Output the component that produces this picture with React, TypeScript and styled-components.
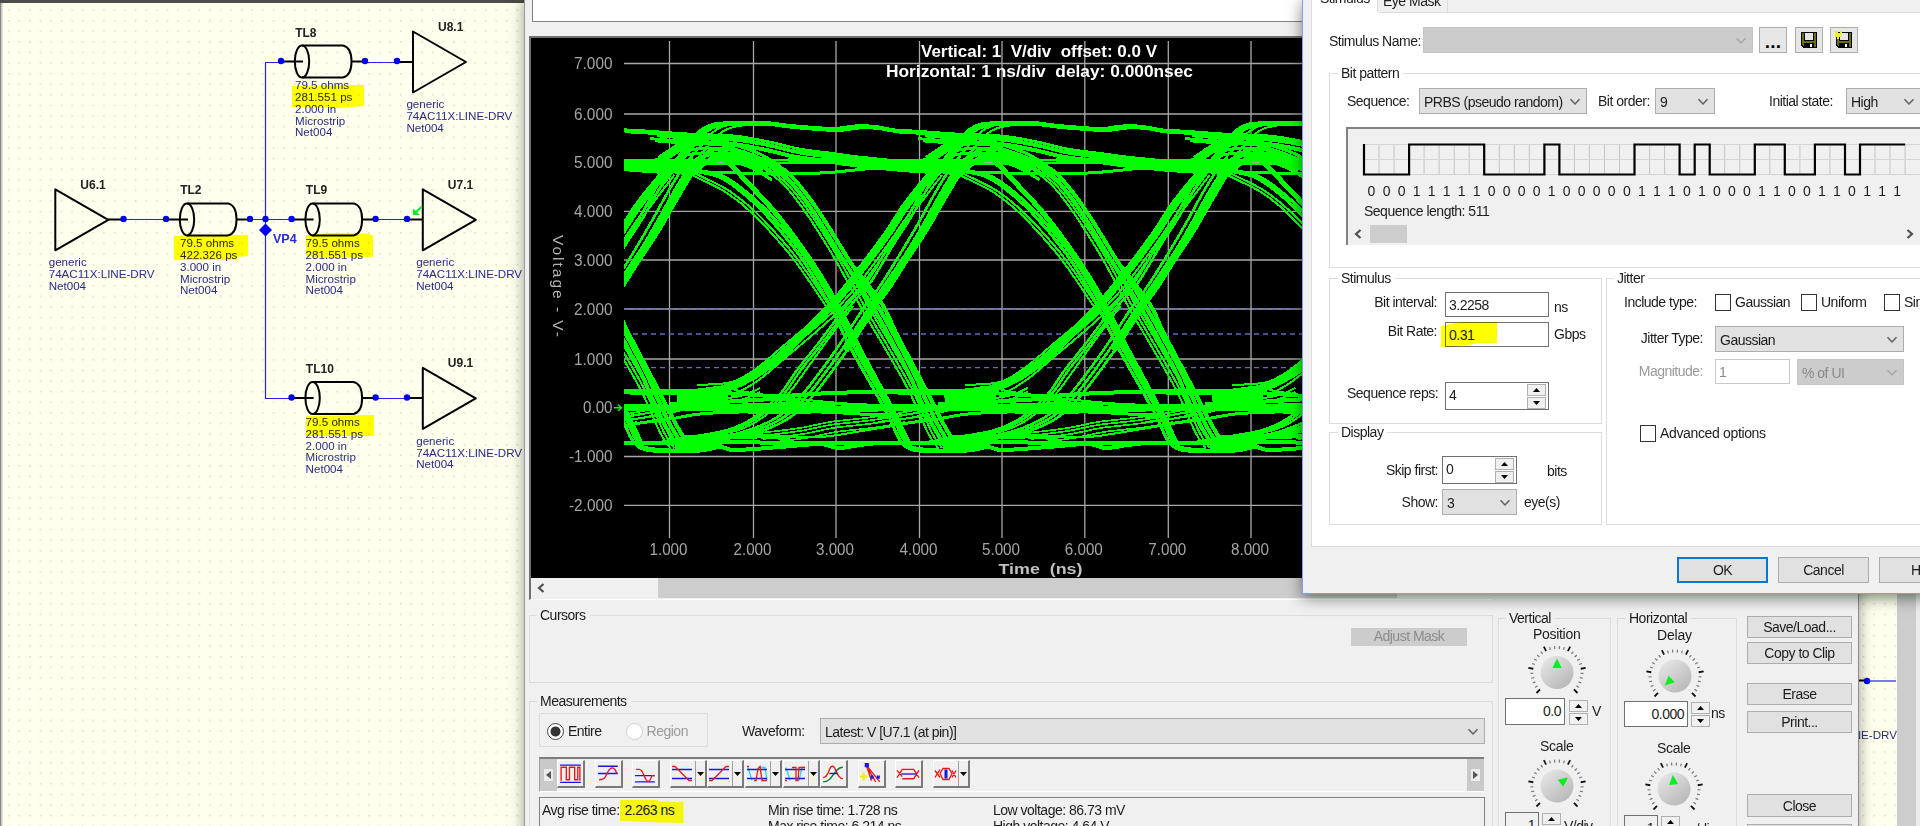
import React from "react";
import styled, { createGlobalStyle, css } from "styled-components";

const Global = createGlobalStyle`
  body { margin: 0; background: #ffffee; overflow: hidden; }
  * { box-sizing: border-box; }
`;

const UI_FONT = `"Liberation Sans", Arial, sans-serif`;

const Desktop = styled.div`
  position: relative;
  width: 1920px;
  height: 826px;
  overflow: hidden;
  background: #ffffee;
  font: 14px/16px ${UI_FONT};
  letter-spacing: -0.5px;
  color: #1c1c1c;
  white-space: pre;
`;

/* ---------- schematic editor ---------- */

const SchematicCanvas = styled.svg`
  display: block;
  width: 1920px;
  height: 826px;
  letter-spacing: 0;
`;

const Ref = styled.text`
  font: bold 12px ${UI_FONT};
  fill: #222;
`;

const Note = styled.text`
  font: 11.6px ${UI_FONT};
  fill: #2a2a86;
`;

const Marker = styled.polygon`
  fill: #ffff00;
  mix-blend-mode: multiply;
`;

const Notes = ({ x, ys, lines }: { x: number; ys: number[]; lines: string[] }) => (
  <>
    {lines.map((l, i) => (
      <Note key={i} x={x} y={ys[i] + 0.6}>{l}</Note>
    ))}
  </>
);

const Pin = ({ x, y }: { x: number; y: number }) => <circle cx={x} cy={y} r={3.2} fill="#0000f0" />;

const Wire = ({ d }: { d: string }) => <path d={d} fill="none" stroke="#2222e8" strokeWidth={1.2} />;

const Buffer = ({ x, y, name }: { x: number; y: number; name: string }) => (
  <g>
    <path d={`M${x} ${y - 30.5}V${y + 30.5}L${x + 53} ${y}Z`} fill="none" stroke="#000" strokeWidth={2} strokeLinejoin="round" />
    <Ref x={x + 25} y={y - 31.3}>{name}</Ref>
    <Notes x={x - 6.6} ys={[y + 45.5, y + 57.7, y + 69.2]} lines={["generic", "74AC11X:LINE-DRV", "Net004"]} />
  </g>
);

type LineProps = { x: number; y: number; name: string; delay: string; length: string };
const TransmissionLine = ({ x, y, name, delay, length }: LineProps) => (
  <g>
    <g fill="none" stroke="#000" strokeWidth={2}>
      <ellipse cx={x} cy={y} rx={7.2} ry={16} />
      <path d={`M${x} ${y - 16}H${x + 41}Q${x + 49.5} ${y - 14} ${x + 49.5} ${y}Q${x + 49.5} ${y + 14} ${x + 41} ${y + 16}H${x}`} />
      <path d={`M${x - 19} ${y}H${x + 1}M${x + 50} ${y}H${x + 62}`} />
    </g>
    <Pin x={x - 21} y={y - 0.5} />
    <Pin x={x + 63} y={y - 0.5} />
    <Ref x={x - 6.8} y={y - 25}>{name}</Ref>
    <Notes
      x={x - 7}
      ys={[y + 27.2, y + 39, y + 51, y + 62.6, y + 74]}
      lines={["79.5 ohms", delay, length, "Microstrip", "Net004"]}
    />
  </g>
);

const Schematic = () => (
  <SchematicCanvas viewBox="0 0 1920 826">
    <defs>
      <pattern id="dots" x="3" y="4.5" width="10.6" height="10.6" patternUnits="userSpaceOnUse">
        <rect x="5" y="5" width="1.2" height="1.2" fill="#c6c6b4" />
      </pattern>
    </defs>
    <rect width="1920" height="826" fill="#ffffee" />
    <rect width="1920" height="826" fill="url(#dots)" />
    <rect width="1.5" height="826" fill="#8a8a8a" />
    <rect x="1.5" width="1" height="826" fill="#c8c8c0" />
    <rect width="525" height="3" fill="#4c4c48" />
    <Wire d="M280 62.5H265.5V398.5H291" />
    <Wire d="M123 219.5H165M249 219.5H292M375 219.5H407M366 62.5H397M375 398.5H407" />
    <path d="M108 219.400H123M397 62H413M407 219.400H423M407 398H423" stroke="#000" strokeWidth={2} />
    <TransmissionLine x={302} y={61.5} name="TL8" delay="281.551 ps" length="2.000 in" />
    <TransmissionLine x={187} y={219.4} name="TL2" delay="422.326 ps" length="3.000 in" />
    <TransmissionLine x={312.6} y={219.4} name="TL9" delay="281.551 ps" length="2.000 in" />
    <TransmissionLine x={312.6} y={398} name="TL10" delay="281.551 ps" length="2.000 in" />
    <Buffer x={413} y={62} name="U8.1" />
    <Buffer x={55.3} y={219.8} name="U6.1" />
    <Buffer x={422.8} y={219.8} name="U7.1" />
    <Buffer x={422.8} y={398.4} name="U9.1" />
    <Pin x={123.5} y={218.9} />
    <Pin x={265.5} y={218.9} />
    <Pin x={397} y={61} />
    <Pin x={407} y={218.9} />
    <Pin x={407} y={397.5} />
    <path d="M265.5 223.5L272 230L265.5 236.5L259 230Z" fill="#0000f0" />
    <text x="273" y="243" fontFamily="Liberation Sans" fontWeight="bold" fontSize="12.5" fill="#2828e8">VP4</text>
    <path d="M422 206.5L415 213" stroke="#00f020" strokeWidth={2} />
    <path d="M413 208.5V215H420Z" fill="#00f020" />
    <Marker points="292,86 364,85 364,106 340,108 292,107" />
    <Marker points="174,236 248,235 248,256 238,257 236,260 174,260" />
    <Marker points="306,235 330,233 369,233.5 373,236 373,257 330,258 306,256" />
    <Marker points="306,416 374,415 374,436 306,436" />
    {/* fragment of the sheet to the right of the oscilloscope */}
    <path d="M1856 680.5H1866" stroke="#000" strokeWidth={2} />
    <Pin x={1867} y={681} />
    <Wire d="M1867 681H1896" />
    <Note x={1791} y={739}>74AC11X:LINE-DRV</Note>
    <rect x="1897" width="19" height="826" fill="#cdcdcd" />
    <rect x="1916" width="4" height="826" fill="#ececec" />
  </SchematicCanvas>
);

/* ---------- shared controls ---------- */

const Row = styled.div<{ $mt?: number; $ml?: number; $h?: number }>`
  display: flex;
  align-items: flex-start;
  margin-top: ${(p) => p.$mt ?? 0}px;
  margin-left: ${(p) => p.$ml ?? 0}px;
  height: ${(p) => (p.$h ? `${p.$h}px` : "auto")};
`;

const Label = styled.span<{ $w?: number; $ml?: number; $pt?: number; $right?: boolean; $off?: boolean; $ls?: number }>`
  flex: none;
  width: ${(p) => (p.$w ? `${p.$w}px` : "auto")};
  margin-left: ${(p) => p.$ml ?? 0}px;
  padding-top: ${(p) => p.$pt ?? 0}px;
  text-align: ${(p) => (p.$right ? "right" : "left")};
  color: ${(p) => (p.$off ? "#9a9a9a" : "inherit")};
  ${(p) => p.$ls !== undefined && css`letter-spacing: ${p.$ls}px;`}
`;

const Group = styled.fieldset<{ $w: number; $h: number; $pl: number; $mt?: number; $line?: string }>`
  flex: none;
  min-width: 0;
  width: ${(p) => p.$w}px;
  height: ${(p) => p.$h}px;
  margin: ${(p) => p.$mt ?? 0}px 0 0;
  padding: 0 0 0 ${(p) => p.$pl}px;
  border: 1px solid ${(p) => p.$line ?? "#dcdcdc"};
`;

const Legend = styled.legend<{ $ml: number }>`
  margin-left: ${(p) => p.$ml}px;
  padding: 0 4px 0 3px;
`;

const ComboBox = styled.div<{ $w: number; $ml?: number; $mt?: number; $off?: boolean }>`
  flex: none;
  display: flex;
  align-items: center;
  justify-content: space-between;
  width: ${(p) => p.$w}px;
  height: 26px;
  margin-left: ${(p) => p.$ml ?? 0}px;
  margin-top: ${(p) => p.$mt ?? 0}px;
  padding: 1px 5px 0 4px;
  border: 1px solid ${(p) => (p.$off ? "#c4c4c4" : "#adadad")};
  background: ${(p) => (p.$off ? "#cccccc" : "#e1e1e1")};
  color: ${(p) => (p.$off ? "#8a8a8a" : "#1c1c1c")};
`;

const Chevron = ({ off }: { off?: boolean }) => (
  <svg width="12" height="8" viewBox="0 0 12 8">
    <path d="M1.5 1.2L6 6L10.5 1.2" fill="none" stroke={off ? "#a8a8a8" : "#606060"} strokeWidth="1.5" />
  </svg>
);

type ComboProps = { w: number; ml?: number; mt?: number; off?: boolean; value?: string };
const Combo = ({ w, ml, mt, off, value }: ComboProps) => (
  <ComboBox $w={w} $ml={ml} $mt={mt} $off={off}>
    <span>{value}</span>
    <Chevron off={off} />
  </ComboBox>
);

const Field = styled.div<{ $w: number; $h?: number; $ml?: number; $off?: boolean; $right?: boolean; $bg?: string }>`
  flex: none;
  display: flex;
  justify-content: ${(p) => (p.$right ? "flex-end" : "space-between")};
  width: ${(p) => p.$w}px;
  height: ${(p) => p.$h ?? 25}px;
  margin-left: ${(p) => p.$ml ?? 0}px;
  padding: 4px ${(p) => (p.$right ? 3 : 2)}px 0 3px;
  border: 1px solid ${(p) => (p.$off ? "#c8c8c8" : "#707070")};
  background: ${(p) => p.$bg ?? "#fff"};
  color: ${(p) => (p.$off ? "#8a8a8a" : "#1c1c1c")};
`;

const Highlight = styled.span`
  margin: -5px 0 0 -8px;
  padding: 5px 0 0 8px;
  width: 56px;
  height: 25px;
  background: #ffff00;
  mix-blend-mode: multiply;
  clip-path: polygon(0 16%, 35% 0, 100% 0, 100% 84%, 65% 84%, 50% 92%, 12% 100%, 0 100%);
`;

const SpinColumn = styled.div<{ $ml?: number; $mt?: number }>`
  display: flex;
  flex: none;
  flex-direction: column;
  gap: 1px;
  width: 19px;
  margin: ${(p) => p.$mt ?? 0}px 0 0 ${(p) => p.$ml ?? 0}px;
`;

const SpinButton = styled.div`
  display: flex;
  align-items: center;
  justify-content: center;
  height: 12px;
  border: 1px solid #b0b0b0;
  background: #f0f0f0;
`;

const Spin = ({ ml, mt }: { ml?: number; mt?: number }) => (
  <SpinColumn $ml={ml} $mt={mt}>
    <SpinButton><svg width="7" height="4"><path d="M3.5 0L7 4H0Z" /></svg></SpinButton>
    <SpinButton><svg width="7" height="4"><path d="M0 0H7L3.5 4Z" /></svg></SpinButton>
  </SpinColumn>
);

const Button = styled.div<{ $w: number; $h?: number; $ml?: number; $mt?: number; $primary?: boolean; $off?: boolean }>`
  flex: none;
  width: ${(p) => p.$w}px;
  height: ${(p) => p.$h ?? 26}px;
  line-height: ${(p) => (p.$h ?? 26) - (p.$primary ? 3 : 1)}px;
  margin: ${(p) => p.$mt ?? 0}px 0 0 ${(p) => p.$ml ?? 0}px;
  overflow: hidden;
  text-align: center;
  border: ${(p) => (p.$primary ? "2px solid #0078d7" : p.$off ? "0" : "1px solid #adadad")};
  background: ${(p) => (p.$off ? "#cccccc" : "#e1e1e1")};
  color: ${(p) => (p.$off ? "#8c8c8c" : "#1c1c1c")};
`;

const CheckBox = styled.span<{ $ml?: number }>`
  flex: none;
  width: 16px;
  height: 17px;
  margin-left: ${(p) => p.$ml ?? 0}px;
  border: 1px solid #333;
  background: #fff;
`;

/* ---------- oscilloscope: eye diagram ---------- */

type Pt = [number, number];

const smooth = (pts: Pt[]) => {
  let d = `M${pts[0][0].toFixed(1)} ${pts[0][1].toFixed(1)}`;
  for (let i = 0; i < pts.length - 1; i++) {
    const p0 = pts[Math.max(0, i - 1)];
    const p1 = pts[i];
    const p2 = pts[i + 1];
    const p3 = pts[Math.min(pts.length - 1, i + 2)];
    const c = [
      p1[0] + (p2[0] - p0[0]) / 6, p1[1] + (p2[1] - p0[1]) / 6,
      p2[0] - (p3[0] - p1[0]) / 6, p2[1] - (p3[1] - p1[1]) / 6,
      p2[0], p2[1],
    ];
    d += `C${c.map((v) => v.toFixed(1)).join(" ")}`;
  }
  return d;
};

type Trace = { pts: Pt[]; w?: number; off?: Pt[] };

const traces: Trace[] = [
  /* overshoot plateau, decaying back to the 5 V rail */
  { w: 4, pts: [[672, 166], [690, 143], [702, 130], [714, 124.5], [735, 123], [765, 123], [790, 126], [815, 128], [835, 129], [855, 126.5], [875, 127], [895, 130.5], [920, 132], [945, 135], [965, 138]], off: [[0, 0], [4, 1]] },
  { w: 2, pts: [[683, 166], [700, 147], [712, 133], [724, 126], [745, 122]], off: [[0, 0], [6, 2]] },
  { w: 2.6, pts: [[655, 131.5], [690, 134], [735, 136], [770, 142], [800, 149], [830, 153], [860, 157], [900, 161], [930, 163]], off: [[0, 0], [-4, 2], [2, 4.5], [-5, 7], [0, 9.5]] },
  { w: 3, pts: [[690, 142], [712, 139], [735, 145], [760, 154], [780, 166]], off: [[0, 0], [0, 4], [-4, 9], [-8, 14]] },
  { w: 4, pts: [[700, 160], [712, 150], [728, 149], [745, 154], [765, 160]], off: [[0, 0], [-5, 5], [4, 5], [-2, 10]] },
  { w: 9, pts: [[660, 160], [678, 148], [692, 139], [702, 140]] },
  { w: 8, pts: [[722, 155], [740, 157], [766, 163]] },
  { w: 14, pts: [[655, 165], [672, 166], [696, 170]] },
  /* 5 V rail */
  { w: 2.5, pts: [[610, 160], [680, 160], [740, 161], [800, 159.5], [860, 159.5], [900, 160]], off: [[0, 0], [0, 3]] },
  { w: 11, pts: [[868, 164.5], [900, 165], [950, 165]] },
  { w: 9, pts: [[935, 165], [964, 166]] },
  { w: 3, pts: [[640, 169], [680, 171], [720, 172.5], [765, 173.5], [820, 173], [860, 169.5], [890, 166]] },
  /* falling edges */
  { w: 2, pts: [[665, 168], [682, 171], [700, 179], [727, 193], [753, 214], [787, 251], [807, 278], [829, 311]], off: [[0, 0], [2.5, -2]] },
  { w: 3, pts: [[690, 169], [720, 175], [740, 187], [767, 211], [800, 250], [820, 281], [837, 312], [853, 345], [877, 388], [893, 417], [904, 440], [917, 449], [945, 451]], off: [[0, 0], [-3.5, 1]] },
  { w: 5, pts: [[722, 158], [732, 166], [747, 182], [773, 210], [797, 241], [820, 275], [838, 306], [856, 342], [879, 385], [896, 417], [908, 442]] },
  { w: 2, pts: [[755, 160], [770, 170], [790, 187], [810, 213], [833, 249], [850, 279], [867, 311], [887, 345], [913, 391], [932, 433], [942, 448]], off: [[0, 0], [4, 0], [-4, 0]] },
  { w: 4, pts: [[765, 160], [787, 172], [807, 195], [823, 218], [847, 257], [880, 310], [913, 371], [924, 396], [938, 425], [952, 448]], off: [[0, 0], [-5, 1]] },
  { w: 4, pts: [[850, 262], [882, 304], [896, 333], [925, 388], [944, 425], [956, 445]] },
  /* rising edges */
  { w: 8, pts: [[690, 393], [720, 390], [753, 376], [780, 356], [807, 330], [833, 304], [856, 276], [886, 236], [905, 207], [923, 184], [937, 168]] },
  { w: 2, pts: [[700, 391], [735, 388], [760, 374], [785, 353], [810, 332], [837, 308], [861, 281], [891, 240], [911, 211], [929, 187], [942, 170]], off: [[0, 0], [0, 5], [-3, -6]] },
  { w: 2.4, pts: [[660, 442], [690, 437], [727, 430], [753, 418], [780, 394], [797, 370], [820, 341], [847, 305], [867, 282], [890, 244], [908, 216], [926, 184], [940, 164]], off: [[0, 0], [3.5, 0.5]] },
  { w: 2, pts: [[690, 438], [735, 431], [762, 418], [788, 394], [806, 370], [829, 338], [853, 306]] },
  { w: 2.6, pts: [[700, 440], [740, 435], [767, 426], [787, 415], [807, 396], [833, 362], [853, 333], [870, 307], [887, 284], [920, 230], [940, 194], [955, 170], [965, 158]], off: [[0, 0], [-5, -1], [5, 1]] },
  { w: 8, pts: [[845, 350], [873, 307], [890, 282], [923, 232], [941, 201], [957, 174], [965, 163]] },
  /* 0 V rails */
  { w: 4, pts: [[610, 392], [660, 393], [700, 392], [740, 394], [780, 396], [830, 393], [878, 392]] },
  { w: 2, pts: [[610, 390], [690, 390], [720, 387], [745, 392], [790, 398], [840, 403], [878, 405]] },
  { w: 3, pts: [[610, 405.5], [700, 406], [780, 404], [840, 404], [878, 405.5]] },
  { w: 6, pts: [[610, 408.5], [700, 408], [790, 408], [835, 408.5], [878, 408.5]] },
  { w: 3, pts: [[700, 409], [760, 412.5], [820, 412], [860, 414], [890, 415]] },
  { w: 11, pts: [[677, 400], [700, 398], [728, 397]] },
  { w: 4, pts: [[670, 404], [700, 403], [740, 401], [780, 399], [800, 402]] },
  { w: 2, pts: [[610, 418], [635, 415], [665, 410], [700, 402], [740, 396], [760, 388]], off: [[0, 0], [0, 4]] },
  { w: 3, pts: [[610, 428], [640, 423], [670, 419], [700, 414], [740, 412], [780, 412]] },
  /* undershoot rails */
  { w: 4, pts: [[610, 443], [680, 443], [720, 442], [800, 443], [878, 443]] },
  { w: 4, pts: [[640, 447], [660, 450], [700, 450.5], [720, 447], [735, 450], [780, 447], [820, 444], [838, 448], [860, 445], [878, 443]] },
  { w: 11, pts: [[675, 444], [700, 444], [722, 443]] },
  { w: 5, pts: [[682, 438], [720, 437], [760, 436], [790, 438]] },
  { w: 2, pts: [[740, 438], [780, 437], [820, 437], [850, 433], [885, 427], [905, 422]] },
  { w: 1.7, pts: [[760, 436], [800, 431], [830, 425], [865, 421], [900, 416], [925, 411]], off: [[0, 0], [3, 3], [0, -3], [6, 7]] },
];

const PERIOD = 267.7;
const gridX = [669.5, 753.5, 836, 919.5, 1002, 1084.8, 1168.3, 1251, 1334, 1417];
const gridY: [string, number][] = [
  ["7.000", 63.5], ["6.000", 114], ["5.000", 162.5], ["4.000", 211.3], ["3.000", 260],
  ["2.000", 309], ["1.000", 359], ["0.00", 407.5], ["-1.000", 456.5], ["-2.000", 505.3],
];

const ScopePlot = styled.svg`
  display: block;
  background: #000;
  letter-spacing: 0;
`;

const AxisText = styled.text`
  font: 16px ${UI_FONT};
  fill: #a6a6a6;
`;

const ScopeTitle = styled.text`
  font: bold 16px ${UI_FONT};
  fill: #fff;
  white-space: pre;
`;

const EyeDiagram = () => (
  <ScopePlot width="961" height="540" viewBox="531 38 961 540">
    <defs>
      <clipPath id="plot"><rect x="624" y="38" width="900" height="500" /></clipPath>
      <g id="eye" fill="none" stroke="#00ff00" shapeRendering="crispEdges">
        {traces.map((t, i) =>
          (t.off ?? ([[0, 0]] as Pt[])).map((o, j) => (
            <path key={`${i}-${j}`} d={smooth(t.pts)} strokeWidth={t.w ?? 2} transform={`translate(${o[0]} ${o[1]})`} />
          ))
        )}
      </g>
    </defs>
    <g stroke="#a8a8a8" strokeWidth="1.3">
      {gridX.map((x) => <path key={x} d={`M${x} 41V538`} />)}
      {gridY.filter(([l]) => l !== "0.00").map(([l, y]) => <path key={l} d={`M624 ${y}H1500`} />)}
    </g>
    <g stroke="#6a6ab8" strokeWidth="1.4" strokeDasharray="5 4">
      <path d="M624 309H1500M624 334H1500M624 367.6H1500" />
    </g>
    <g clipPath="url(#plot)">
      {[-1, 0, 1, 2].map((k) => <use key={k} href="#eye" x={k * PERIOD} />)}
    </g>
    {gridY.map(([l, y]) => (
      <AxisText key={l} x={612.5} y={y + 5.8} textAnchor="end" textLength={l === "0.00" ? 29.5 : l[0] === "-" ? 43.5 : 38.5} lengthAdjust="spacingAndGlyphs">{l}</AxisText>
    ))}
    {gridX.map((x, i) => (
      <AxisText key={x} x={x - 1} y={555} textAnchor="middle" textLength={38} lengthAdjust="spacingAndGlyphs">{`${i + 1}.000`}</AxisText>
    ))}
    <path d="M614 407.7H621M618 404.5L621.5 407.7L618 411" stroke="#00ff00" strokeWidth="1.4" fill="none" />
    <text transform="translate(553 235) rotate(90)" fontFamily="Liberation Sans" fontSize="15.5" fill="#b4b4b4" textLength="102">Voltage - V-</text>
    <text x="998.5" y="574" fontFamily="Liberation Sans" fontWeight="bold" fontSize="15.5" fill="#c0c0c0" textLength="84" lengthAdjust="spacingAndGlyphs" xmlSpace="preserve">{"Time  (ns)"}</text>
    <ScopeTitle x="921" y="57" textLength="236" lengthAdjust="spacingAndGlyphs" xmlSpace="preserve">{"Vertical: 1  V/div  offset: 0.0 V"}</ScopeTitle>
    <ScopeTitle x="886" y="77" textLength="307" lengthAdjust="spacingAndGlyphs" xmlSpace="preserve">{"Horizontal: 1 ns/div  delay: 0.000nsec"}</ScopeTitle>
  </ScopePlot>
);

/* ---------- oscilloscope window ---------- */

const ScopeWindow = styled.div`
  position: absolute;
  left: 524px;
  top: 0;
  width: 1335px;
  height: 840px;
  border-left: 1px solid #9a9a9a;
  border-right: 1px solid #8c8c8c;
  background: #f0f0f0;
  box-shadow: 0 0 14px rgba(0, 0, 0, 0.4);
`;

const ListPane = styled.div`
  width: 960px;
  height: 22px;
  margin-left: 7px;
  border: 1px solid #828282;
  border-width: 0 0 1px 1px;
  background: #fff;
`;

const PlotFrame = styled.div`
  width: 963px;
  height: 564px;
  margin: 14px 0 0 4px;
  border: solid #707070;
  border-width: 2px 0 0 2px;
  border-bottom: 1px solid #fff;
`;

const ScrollTrack = styled.div<{ $h: number }>`
  display: flex;
  align-items: center;
  height: ${(p) => p.$h}px;
  background: #f0f0f0;
`;

const ScrollThumb = styled.div<{ $w: number; $ml: number }>`
  width: ${(p) => p.$w}px;
  height: 100%;
  margin-left: ${(p) => p.$ml}px;
  background: #cdcdcd;
`;

const ScrollArrow = ({ right, ml }: { right?: boolean; ml: number }) => (
  <svg width={8 + ml} height="12" viewBox={`${-ml} 0 ${8 + ml} 12`}>
    <path d={right ? "M1.5 2L6 6L1.5 10" : "M6.5 2L2 6L6.5 10"} fill="none" stroke="#505050" strokeWidth="2.2" />
  </svg>
);

const Lower = styled.div`
  display: flex;
  margin: 7px 0 0 4px;
`;

const Column = styled.div<{ $w: number; $ml?: number; $mt?: number }>`
  flex: none;
  display: flex;
  flex-direction: column;
  width: ${(p) => p.$w}px;
  margin: ${(p) => p.$mt ?? 0}px 0 0 ${(p) => p.$ml ?? 0}px;
`;

const RadioPanel = styled.div`
  display: flex;
  align-items: center;
  flex: none;
  width: 169px;
  height: 34px;
  padding: 2px 0 0 7px;
  border: 1px solid #dcdcdc;
`;

const Radio = styled.span<{ $on?: boolean; $ml?: number }>`
  width: 17px;
  height: 17px;
  margin: 0 4px 0 ${(p) => p.$ml ?? 0}px;
  border: 1.5px solid ${(p) => (p.$on ? "#444" : "#cfcfcf")};
  border-radius: 50%;
  background: ${(p) => (p.$on ? "radial-gradient(circle, #333 0 4.6px, #fff 5.4px)" : "#fff")};
`;

const ToolStrip = styled.div`
  display: flex;
  width: 945px;
  height: 35px;
  margin-top: 10px;
  border-top: 2px solid #7c7c7c;
  border-left: 1px solid #a0a0a0;
  border-bottom: 1px solid #fff;
  background: #f0f0f0;
`;

const StripEnd = styled.div<{ $push?: boolean }>`
  flex: none;
  display: flex;
  align-items: center;
  justify-content: center;
  width: 17px;
  margin-left: ${(p) => (p.$push ? "auto" : 0)};
  background: #c9c9c9;
`;

const StripArrow = styled.span`
  display: flex;
  align-items: center;
  justify-content: center;
  width: 9px;
  height: 12px;
  background: #ececec;
`;

const Tool = styled.div<{ $ml?: number }>`
  display: flex;
  flex: none;
  height: 28px;
  margin: 1px 0 0 ${(p) => p.$ml ?? 0}px;
  border: solid;
  border-width: 1px 2px 2px 1px;
  border-color: #fff #7a7a7a #7a7a7a #fff;
  background: #f0f0f0;
`;

const ToolDrop = styled.span`
  display: flex;
  align-items: center;
  justify-content: center;
  width: 10px;
  border-left: 1px solid #a0a0a0;
`;

const R = "#e81818";
const B = "#1818e0";
const C = "#20d8f0";
const toolIcons: { ml: number; drop?: boolean; art: React.ReactNode }[] = [
  { ml: 0, art: <><path d="M2 4H22M2 20.500H22" stroke={B} /><path d="M3 19V6H8V18H11V6H16V18H19V6H21V19" stroke={R} /></> },
  { ml: 9.6, art: <><path d="M2 5H21M2 12H21" stroke={B} /><path d="M3 18C9 18 9 15 11 11S15 6 17 7S19 10 20 12" stroke={R} /></> },
  { ml: 9.6, art: <><path d="M2 14H21M2 20H21" stroke={B} /><path d="M3 8H6C9 8 10 13 12 17S16 21 18 14H21" stroke={R} /></> },
  { ml: 9.6, drop: true, art: <><path d="M1 8H21M1 17H21" stroke={B} /><path d="M1 5H4L18 19H21" stroke={R} /></> },
  { ml: 0.6, drop: true, art: <><path d="M1 8H21M1 17H21" stroke={B} /><path d="M1 19H4L18 5H21" stroke={R} /></> },
  { ml: 0.6, drop: true, art: <><path d="M2 6L6 19M14 6H19L21 19" stroke={C} /><path d="M1 8H21M1 17H21" stroke={B} /><path d="M1 5H3M8 19H10L12 7L14 5L16 19H21" stroke={R} /></> },
  { ml: 0.6, drop: true, art: <><path d="M2 6L6 19M15 19L18 6H21" stroke={C} /><path d="M1 8H21M1 17H21" stroke={B} /><path d="M1 19H3M8 6H12V19H14L15 6H21" stroke={R} /></> },
  { ml: 0.6, art: <><path d="M2 20C12 20 12 6 21 6" stroke="#108030" /><path d="M2 16C8 16 7 5 11 5S14 16 21 17" stroke={R} /><path d="M8 12H16" stroke={B} /></> },
  { ml: 9.6, art: <><path d="M1 15H8M4.500 11V19" stroke="#f0f000" strokeWidth="2" /><path d="M7 4L12 19M7 4L20 20M9 8L16 20" stroke={R} /><path d="M5.500 2H9.500V6H5.500ZM11 14H14V17H11ZM17 14H20V17H17Z" fill={B} stroke="none" /></> },
  { ml: 9.6, art: <><path d="M1 9L6 15M1 16L6 8H17L22 16M6 17H17L22 9" stroke={R} /><path d="M5 12.500H19" stroke={B} /></> },
  { ml: 9.6, drop: true, art: <><path d="M1 9L6 16M1 16L6 8M9 7H15L18 12L15 18H9L6 12ZM22 9L18 16M22 16L18 9" stroke={R} /><path d="M12 8V17" stroke={B} strokeWidth="3" /></> },
];

const Results = styled.div`
  display: grid;
  grid-template-columns: 226px 225px 1fr;
  grid-auto-rows: 16px;
  width: 946px;
  height: 60px;
  margin-top: 5px;
  padding: 4px 0 0 2px;
  border: 1px solid #828282;
`;

const ResultMark = styled.span`
  display: inline-block;
  width: 64px;
  height: 23px;
  margin: -2px 0 0 0;
  padding: 2px 0 0 5px;
  background: #f6f60c;
  clip-path: polygon(0 0, 60% 0, 60% 5%, 100% 10%, 100% 100%, 40% 96%, 0 90%);
`;

const KnobSvg = styled.svg`
  display: block;
  flex: none;
`;

const Knob = ({ h, cx, cy, angle }: { h: number; cx: number; cy: number; angle: number }) => (
  <KnobSvg width="100" height={h}>
    <defs>
      <linearGradient id="dial" x1="0.1" y1="0" x2="0.9" y2="1">
        <stop offset="0" stopColor="#e8e8e8" />
        <stop offset="1" stopColor="#b4b4b4" />
      </linearGradient>
    </defs>
    <g transform={`translate(${cx} ${cy})`}>
      {Array.from({ length: 26 }, (_, i) => {
        const major = i % 5 === 0;
        return (
          <path key={i} d={`M0 ${major ? -24 : -23.5}V${major ? -29 : -26.5}`} stroke={major ? "#111" : "#777"} strokeWidth={major ? 1.8 : 1.2} transform={`rotate(${-135 + i * 10.8})`} />
        );
      })}
      <circle r="16.5" fill="url(#dial)" />
      <path d="M0 -14L4.500 -4.500H-4.500Z" fill="#00f020" transform={`rotate(${angle})`} />
    </g>
  </KnobSvg>
);

const Scope = () => (
  <ScopeWindow>
    <ListPane />
    <PlotFrame>
      <EyeDiagram />
      <ScrollTrack $h={20}>
        <ScrollArrow ml={6} />
        <ScrollThumb $ml={113} $w={739} />
      </ScrollTrack>
    </PlotFrame>
    <Lower>
      <Column $w={964}>
        <Group $w={964} $h={76} $pl={9}>
          <Legend $ml={-2}>Cursors</Legend>
          <Row $mt={5} $ml={812}>
            <Button $w={116} $h={18} $off>Adjust Mask</Button>
          </Row>
        </Group>
        <Group $w={964} $h={200} $pl={9} $mt={10}>
          <Legend $ml={-2}>Measurements</Legend>
          <Row $mt={4} $h={34}>
            <RadioPanel>
              <Radio $on />
              <span>Entire</span>
              <Radio $ml={24} />
              <Label $off>Region</Label>
            </RadioPanel>
            <Label $ml={34} $w={78} $pt={10}>Waveform:</Label>
            <Combo w={665} mt={5} value="Latest: V [U7.1 (at pin)]" />
          </Row>
          <ToolStrip>
            <StripEnd>
              <StripArrow><svg width="5" height="8"><path d="M5 0V8L0 4Z" fill="#555" /></svg></StripArrow>
            </StripEnd>
            {toolIcons.map((t, i) => (
              <Tool key={i} $ml={t.ml}>
                <svg width={t.drop ? 24 : 25} height="25" viewBox="0 0 24 24" fill="none" strokeWidth="1.300">{t.art}</svg>
                {t.drop && <ToolDrop><svg width="7" height="4"><path d="M0 0H7L3.500 4Z" /></svg></ToolDrop>}
              </Tool>
            ))}
            <StripEnd $push>
              <StripArrow><svg width="5" height="8"><path d="M0 0V8L5 4Z" fill="#555" /></svg></StripArrow>
            </StripEnd>
          </ToolStrip>
          <Results>
            <span>Avg rise time:<ResultMark>2.263 ns</ResultMark></span>
            <span>Min rise time: 1.728 ns</span>
            <span>Low voltage: 86.73 mV</span>
            <span />
            <span>Max rise time: 6.214 ns</span>
            <span>High voltage: 4.64 V</span>
          </Results>
        </Group>
      </Column>
      <Column $w={5} />
      <Group $w={113} $h={240} $pl={6} $mt={3}>
        <Legend $ml={1}>Vertical</Legend>
        <Label as="div" $ml={28} $ls={-0.3}>Position</Label>
        <Knob h={56} cx={52} cy={30.5} angle={0} />
        <Row>
          <Field $w={60} $h={27} $right>0.0</Field>
          <Spin ml={4} mt={2} />
          <Label $ml={4} $pt={5}>V</Label>
        </Row>
        <Label as="div" $ml={35} $pt={13} $ls={-0.3}>Scale</Label>
        <Knob h={58} cx={52} cy={32} angle={52} />
        <Row>
          <Field $w={34} $h={27} $right $bg="#f0f0f0">1</Field>
          <Spin ml={3} mt={1} />
          <Label $ml={3} $pt={6}>V/div</Label>
        </Row>
      </Group>
      <Column $w={6} />
      <Group $w={120} $h={240} $pl={6} $mt={3}>
        <Legend $ml={2}>Horizontal</Legend>
        <Label as="div" $ml={33} $pt={1} $ls={-0.2}>Delay</Label>
        <Knob h={58} cx={51} cy={33} angle={-133} />
        <Row>
          <Field $w={64} $h={26} $right>0.000</Field>
          <Spin ml={3} mt={1} />
          <Label $ml={1} $pt={4}>ns</Label>
        </Row>
        <Label as="div" $ml={33} $pt={13} $ls={-0.3}>Scale</Label>
        <Knob h={59} cx={50} cy={33} angle={-5} />
        <Row>
          <Field $w={34} $h={27} $right $bg="#f0f0f0">1</Field>
          <Spin ml={3} mt={1} />
          <Label $ml={2} $pt={6}>ns/div</Label>
        </Row>
      </Group>
      <Column $w={105} $ml={10} $mt={9}>
        <Button $w={105} $h={22}>Save/Load...</Button>
        <Button $w={105} $h={22} $mt={4}>Copy to Clip</Button>
        <Button $w={105} $h={22} $mt={19}>Erase</Button>
        <Button $w={105} $h={22} $mt={6}>Print...</Button>
        <Button $w={105} $h={23} $mt={61}>Close</Button>
        <Button $w={105} $h={23} $mt={7} />
      </Column>
    </Lower>
  </ScopeWindow>
);

/* ---------- stimulus dialog ---------- */

const DialogWindow = styled.div`
  position: absolute;
  left: 1302px;
  top: -1px;
  width: 680px;
  height: 595px;
  padding-left: 8px;
  border: 1px solid #7aa4e0;
  background: #f0f0f0;
  box-shadow: 0 4px 14px rgba(0, 0, 0, 0.5);
`;

const TabStrip = styled.div`
  display: flex;
  height: 12px;
`;

const Tab = styled.div<{ $w: number; $active?: boolean }>`
  width: ${(p) => p.$w}px;
  height: 12px;
  padding-left: ${(p) => (p.$active ? 8 : 5)}px;
  border-right: 1px solid #dcdcdc;
  border-left: ${(p) => (p.$active ? "1px solid #dcdcdc" : "0")};
  background: ${(p) => (p.$active ? "#fff" : "#f0f0f0")};
  & > span { display: block; margin-top: ${(p) => (p.$active ? -10 : -7)}px; }
`;

const Page = styled.div`
  height: 535px;
  padding: 15px 0 0 17px;
  border: 1px solid #dcdcdc;
  border-top: 0;
  background: linear-gradient(#dcdcdc 0 0) 67px 0 / 100% 1px no-repeat #fff;
`;

const WaveBox = styled.div`
  width: 620px;
  height: 118px;
  margin: 13px 0 0 -1px;
  border: solid #828282;
  border-width: 2px 0 0 2px;
  background: #f0f0f0;
`;

const BitRow = styled.div`
  display: flex;
  padding: 4px 0 0 16px;
  & > span { flex: none; width: 15.03px; text-align: center; letter-spacing: 0; }
`;

const bits = "000111110000100000111010001100110111".split("");

const BitWave = () => {
  const x = (i: number) => 16 + i * 15.03;
  const y = (b: string) => (b === "1" ? 15.5 : 45.5);
  let d = `M${x(0)} 15V45.5`;
  bits.forEach((b, i) => {
    d += `V${y(b)}H${x(i + 1).toFixed(1)}`;
  });
  return (
    <svg width="600" height="50" display="block">
      <g stroke="#c4c4c4" strokeWidth="1">
        {Array.from({ length: 37 }, (_, i) => <path key={i} d={`M${x(i).toFixed(1)} 15V46`} />)}
        <path d="M16 15.500H580M16 30.500H580M16 45.500H580" stroke="#d4d4d4" />
      </g>
      <path d={d} fill="none" stroke="#000" strokeWidth="2.200" />
    </svg>
  );
};

const SaveIcon = ({ spark }: { spark?: boolean }) => (
  <svg width="18" height="18" viewBox="0 0 18 18" shapeRendering="crispEdges">
    <path d="M1 1H17V17H3L1 15Z" fill="#000" />
    <path d="M2 2H4V10H14V2H16V16H14V12H4V15L2 14Z" fill="#6c6c10" />
    <rect x="5" y="2" width="8" height="7" fill="#e4e4e4" />
    <rect x="10" y="13" width="2" height="3" fill="#fff" />
    {spark && <path d="M0 0H3V2H5V0H7V3H6V6H4V8H2V6H0Z" fill="#f0f020" />}
  </svg>
);

const IconButton = styled.div<{ $ml: number }>`
  display: flex;
  align-items: center;
  justify-content: center;
  width: 28px;
  height: 26px;
  margin-left: ${(p) => p.$ml}px;
  border: 1px solid #adadad;
  background: #e6e6e6;
`;

const Ellipsis = styled.span`
  padding-top: 4px;
  font-size: 19px;
  font-weight: bold;
  letter-spacing: 0.3px;
  color: #000;
`;

const Dialog = () => (
  <DialogWindow>
    <TabStrip>
      <Tab $w={67} $active><span>Stimulus</span></Tab>
      <Tab $w={70}><span>Eye Mask</span></Tab>
    </TabStrip>
    <Page>
      <Row $h={26}>
        <Label $w={94} $pt={6}>Stimulus Name:</Label>
        <Combo w={330} off />
        <IconButton $ml={6}><Ellipsis>...</Ellipsis></IconButton>
        <IconButton $ml={8}><SaveIcon /></IconButton>
        <IconButton $ml={7}><SaveIcon spark /></IconButton>
      </Row>
      <Group $w={640} $h={203} $pl={17} $mt={12}>
        <Legend $ml={-9}>Bit pattern</Legend>
        <Row $mt={7}>
          <Label $w={72} $pt={5}>Sequence:</Label>
          <Combo w={168} value="PRBS (pseudo random)" />
          <Label $ml={11} $w={57} $pt={5}>Bit order:</Label>
          <Combo w={60} value="9" />
          <Label $ml={54} $w={77} $pt={5}>Initial state:</Label>
          <Combo w={75} value="High" />
        </Row>
        <WaveBox>
          <BitWave />
          <BitRow>{bits.map((b, i) => <span key={i}>{b}</span>)}</BitRow>
          <Label as="div" $ml={16} $pt={4}>Sequence length: 511</Label>
          <Row $mt={6}>
            <ScrollTrack $h={18}>
              <ScrollArrow ml={6} />
              <ScrollThumb $ml={8} $w={37} />
              <ScrollArrow right ml={499} />
            </ScrollTrack>
          </Row>
        </WaveBox>
      </Group>
      <Row $mt={2}>
        <Column $w={273}>
          <Group $w={273} $h={154} $pl={17}>
            <Legend $ml={-9}>Stimulus</Legend>
            <Row $mt={6} $h={25}>
              <Label $w={90} $pt={2} $right>Bit interval:</Label>
              <Field $w={104} $ml={8}>3.2258</Field>
              <Label $ml={5} $pt={7}>ns</Label>
            </Row>
            <Row $mt={5} $h={25}>
              <Label $w={90} $pt={1} $right>Bit Rate:</Label>
              <Field $w={104} $ml={8}><Highlight>0.31</Highlight></Field>
              <Label $ml={5} $pt={4}>Gbps</Label>
            </Row>
            <Row $mt={35} $h={28}>
              <Label $w={90} $pt={3} $right>Sequence reps:</Label>
              <Field $w={104} $h={28} $ml={8}>4<Spin mt={-3} /></Field>
            </Row>
          </Group>
          <Group $w={273} $h={101} $pl={17}>
            <Legend $ml={-9}>Display</Legend>
            <Row $mt={16} $h={28}>
              <Label $w={91} $pt={6} $right>Skip first:</Label>
              <Field $w={75} $h={28} $ml={4}>0<Spin mt={-3} /></Field>
              <Label $ml={30} $pt={7}>bits</Label>
            </Row>
            <Row $mt={5}>
              <Label $w={91} $pt={5} $right>Show:</Label>
              <Combo w={75} ml={4} value="3" />
              <Label $ml={7} $pt={5}>eye(s)</Label>
            </Row>
          </Group>
        </Column>
        <Column $w={4} />
        <Group $w={400} $h={255} $pl={17}>
          <Legend $ml={-10}>Jitter</Legend>
          <Row $mt={8} $h={17}>
            <Label $w={91}>Include type:</Label>
            <CheckBox />
            <Label $ml={4} $w={66}>Gaussian</Label>
            <CheckBox />
            <Label $ml={4} $w={63}>Uniform</Label>
            <CheckBox />
            <Label $ml={4}>Sine</Label>
          </Row>
          <Row $mt={15}>
            <Label $w={79} $pt={4} $right>Jitter Type:</Label>
            <Combo w={189} ml={12} value="Gaussian" />
          </Row>
          <Row $mt={7}>
            <Label $w={79} $pt={4} $right $off>Magnitude:</Label>
            <Field $w={75} $ml={12} $off>1</Field>
            <Combo w={107} ml={7} off value="% of UI" />
          </Row>
          <Row $mt={40} $ml={16}>
            <CheckBox />
            <Label $ml={4} $ls={-0.35}>Advanced options</Label>
          </Row>
        </Group>
      </Row>
    </Page>
    <Row $mt={10} $ml={366}>
      <Button $w={91} $primary>OK</Button>
      <Button $w={91} $ml={10}>Cancel</Button>
      <Button $w={91} $ml={10}>Help</Button>
    </Row>
  </DialogWindow>
);

export default function App() {
  return (
    <Desktop>
      <Global />
      <Schematic />
      <Scope />
      <Dialog />
    </Desktop>
  );
}
